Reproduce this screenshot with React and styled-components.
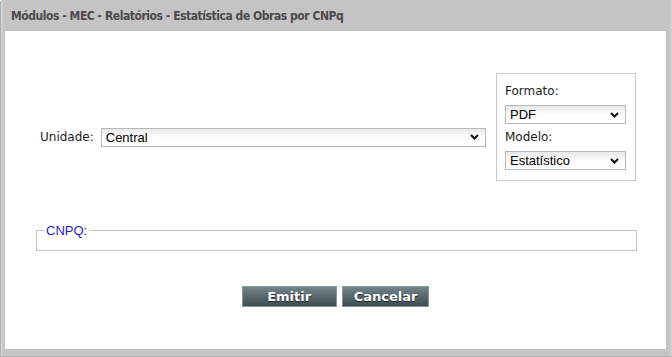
import React from "react";
import styled, { createGlobalStyle } from "styled-components";

const GlobalStyle = createGlobalStyle`
  html, body {
    margin: 0;
    padding: 0;
    background: #ffffff;
  }
`;

const Frame = styled.div`
  box-sizing: border-box;
  width: 672px;
  height: 357px;
  display: flex;
  flex-direction: column;
  padding: 0 6px 7px 4px;
  background: linear-gradient(to right, #d6d8d9 0px, #c4c4c4 3px, #c4c4c4 calc(100% - 3px), #d3d5d6 100%);
  border-left: 1px solid #aab2b6;
  border-bottom: 1px solid #a8b0b4;
  border-top-left-radius: 3px;
`;

const TitleBar = styled.div`
  height: 31px;
  display: flex;
  align-items: center;
  padding-left: 6px;
  padding-top: 1px;
  box-sizing: border-box;
  font-family: "DejaVu Sans Condensed", "DejaVu Sans", sans-serif;
  font-stretch: condensed;
  font-weight: bold;
  font-size: 12px;
  letter-spacing: -0.45px;
  color: #4a4a4a;
`;

const Body = styled.div`
  flex: 1;
  background: #ffffff;
  padding: 42px 30px 0 31px;
  display: flex;
  flex-direction: column;
`;

const TopRow = styled.div`
  display: flex;
  align-items: center;
  gap: 10px;
`;

const UnitGroup = styled.div`
  flex: 1;
  display: flex;
  align-items: center;
  gap: 7px;
  margin-top: 20px;
  padding-left: 4px;
`;

const Label = styled.span`
  font-family: "DejaVu Sans", sans-serif;
  font-size: 12px;
  line-height: 16px;
  color: #1e1e1e;
`;

const SelectWrap = styled.div`
  position: relative;
  flex: ${(p) => (p.$grow ? 1 : "none")};
  width: ${(p) => (p.$width ? p.$width + "px" : "auto")};
  height: ${(p) => p.$height || 19}px;
`;

const Select = styled.select`
  appearance: none;
  box-sizing: border-box;
  width: 100%;
  height: 100%;
  margin: 0;
  padding: 0 20px 0 4px;
  border: 1px solid #b8b8b8;
  border-radius: 0;
  background: linear-gradient(to bottom, #e9e9e9 0%, #ffffff 55%);
  font-family: "Liberation Sans", Arial, sans-serif;
  font-size: 13px;
  color: #000000;
  outline: none;
`;

const Chevron = styled.svg`
  position: absolute;
  right: 7px;
  top: 50%;
  margin-top: -3px;
  pointer-events: none;
`;

const OptionsBox = styled.div`
  box-sizing: border-box;
  width: 140px;
  height: 108px;
  border: 1px solid #c8c8c8;
  padding: 9px 9px 10px 8px;
  display: flex;
  flex-direction: column;
`;

const BoxLabel = styled(Label)`
  margin-bottom: ${(p) => p.$gap || 6}px;
  margin-top: ${(p) => p.$top || 0}px;
`;

const CnpqField = styled.fieldset`
  margin: 42px 0 0 0;
  padding: 0 0 0 7px;
  border: 1px solid #c2c2c2;
  min-width: 0;
  width: 601px;
  box-sizing: border-box;
`;

const CnpqLegend = styled.legend`
  padding: 0 2px;
  font-family: "Liberation Sans", Arial, sans-serif;
  font-size: 13px;
  line-height: 15px;
  color: #1e1ec8;
`;

const CnpqInner = styled.div`
  height: 12px;
`;

const ButtonRow = styled.div`
  display: flex;
  justify-content: center;
  gap: 5px;
  margin-top: 35px;
  padding-right: 1px;
`;

const Button = styled.button`
  box-sizing: border-box;
  height: 21px;
  min-width: ${(p) => p.$minWidth || 0}px;
  padding: 0 11px;
  margin: 0;
  border: 1px solid #8c9497;
  border-radius: 0;
  background: linear-gradient(to bottom, #72848a 0%, #5a6a70 45%, #3f4c51 100%);
  color: #ffffff;
  font-family: "DejaVu Sans", Verdana, sans-serif;
  font-weight: bold;
  font-size: 13px;
  line-height: 19px;
  text-shadow: 0 1px 1px #1c2428;
  cursor: pointer;
`;

const ChevronIcon = () => (
  <Chevron width="9" height="6" viewBox="0 0 9 6">
    <path d="M1 1 L4.5 4.5 L8 1" fill="none" stroke="#111" strokeWidth="2" />
  </Chevron>
);

const SelectBox = ({ value, grow, width, height }) => (
  <SelectWrap $grow={grow} $width={width} $height={height}>
    <Select defaultValue={value}>
      <option>{value}</option>
    </Select>
    <ChevronIcon />
  </SelectWrap>
);

const App = () => {
  return (
    <>
      <GlobalStyle />
      <Frame>
        <TitleBar>Módulos - MEC - Relatórios - Estatística de Obras por CNPq</TitleBar>
        <Body>
          <TopRow>
            <UnitGroup>
              <Label>Unidade:</Label>
              <SelectBox value="Central" grow />
            </UnitGroup>
            <OptionsBox>
              <BoxLabel>Formato:</BoxLabel>
              <SelectBox value="PDF" width={121} height={19} />
              <BoxLabel $top={5} $gap={6}>Modelo:</BoxLabel>
              <SelectBox value="Estatístico" width={121} height={19} />
            </OptionsBox>
          </TopRow>
          <CnpqField>
            <CnpqLegend>CNPQ:</CnpqLegend>
            <CnpqInner />
          </CnpqField>
          <ButtonRow>
            <Button $minWidth={95}>Emitir</Button>
            <Button>Cancelar</Button>
          </ButtonRow>
        </Body>
      </Frame>
    </>
  );
};

export default App;
